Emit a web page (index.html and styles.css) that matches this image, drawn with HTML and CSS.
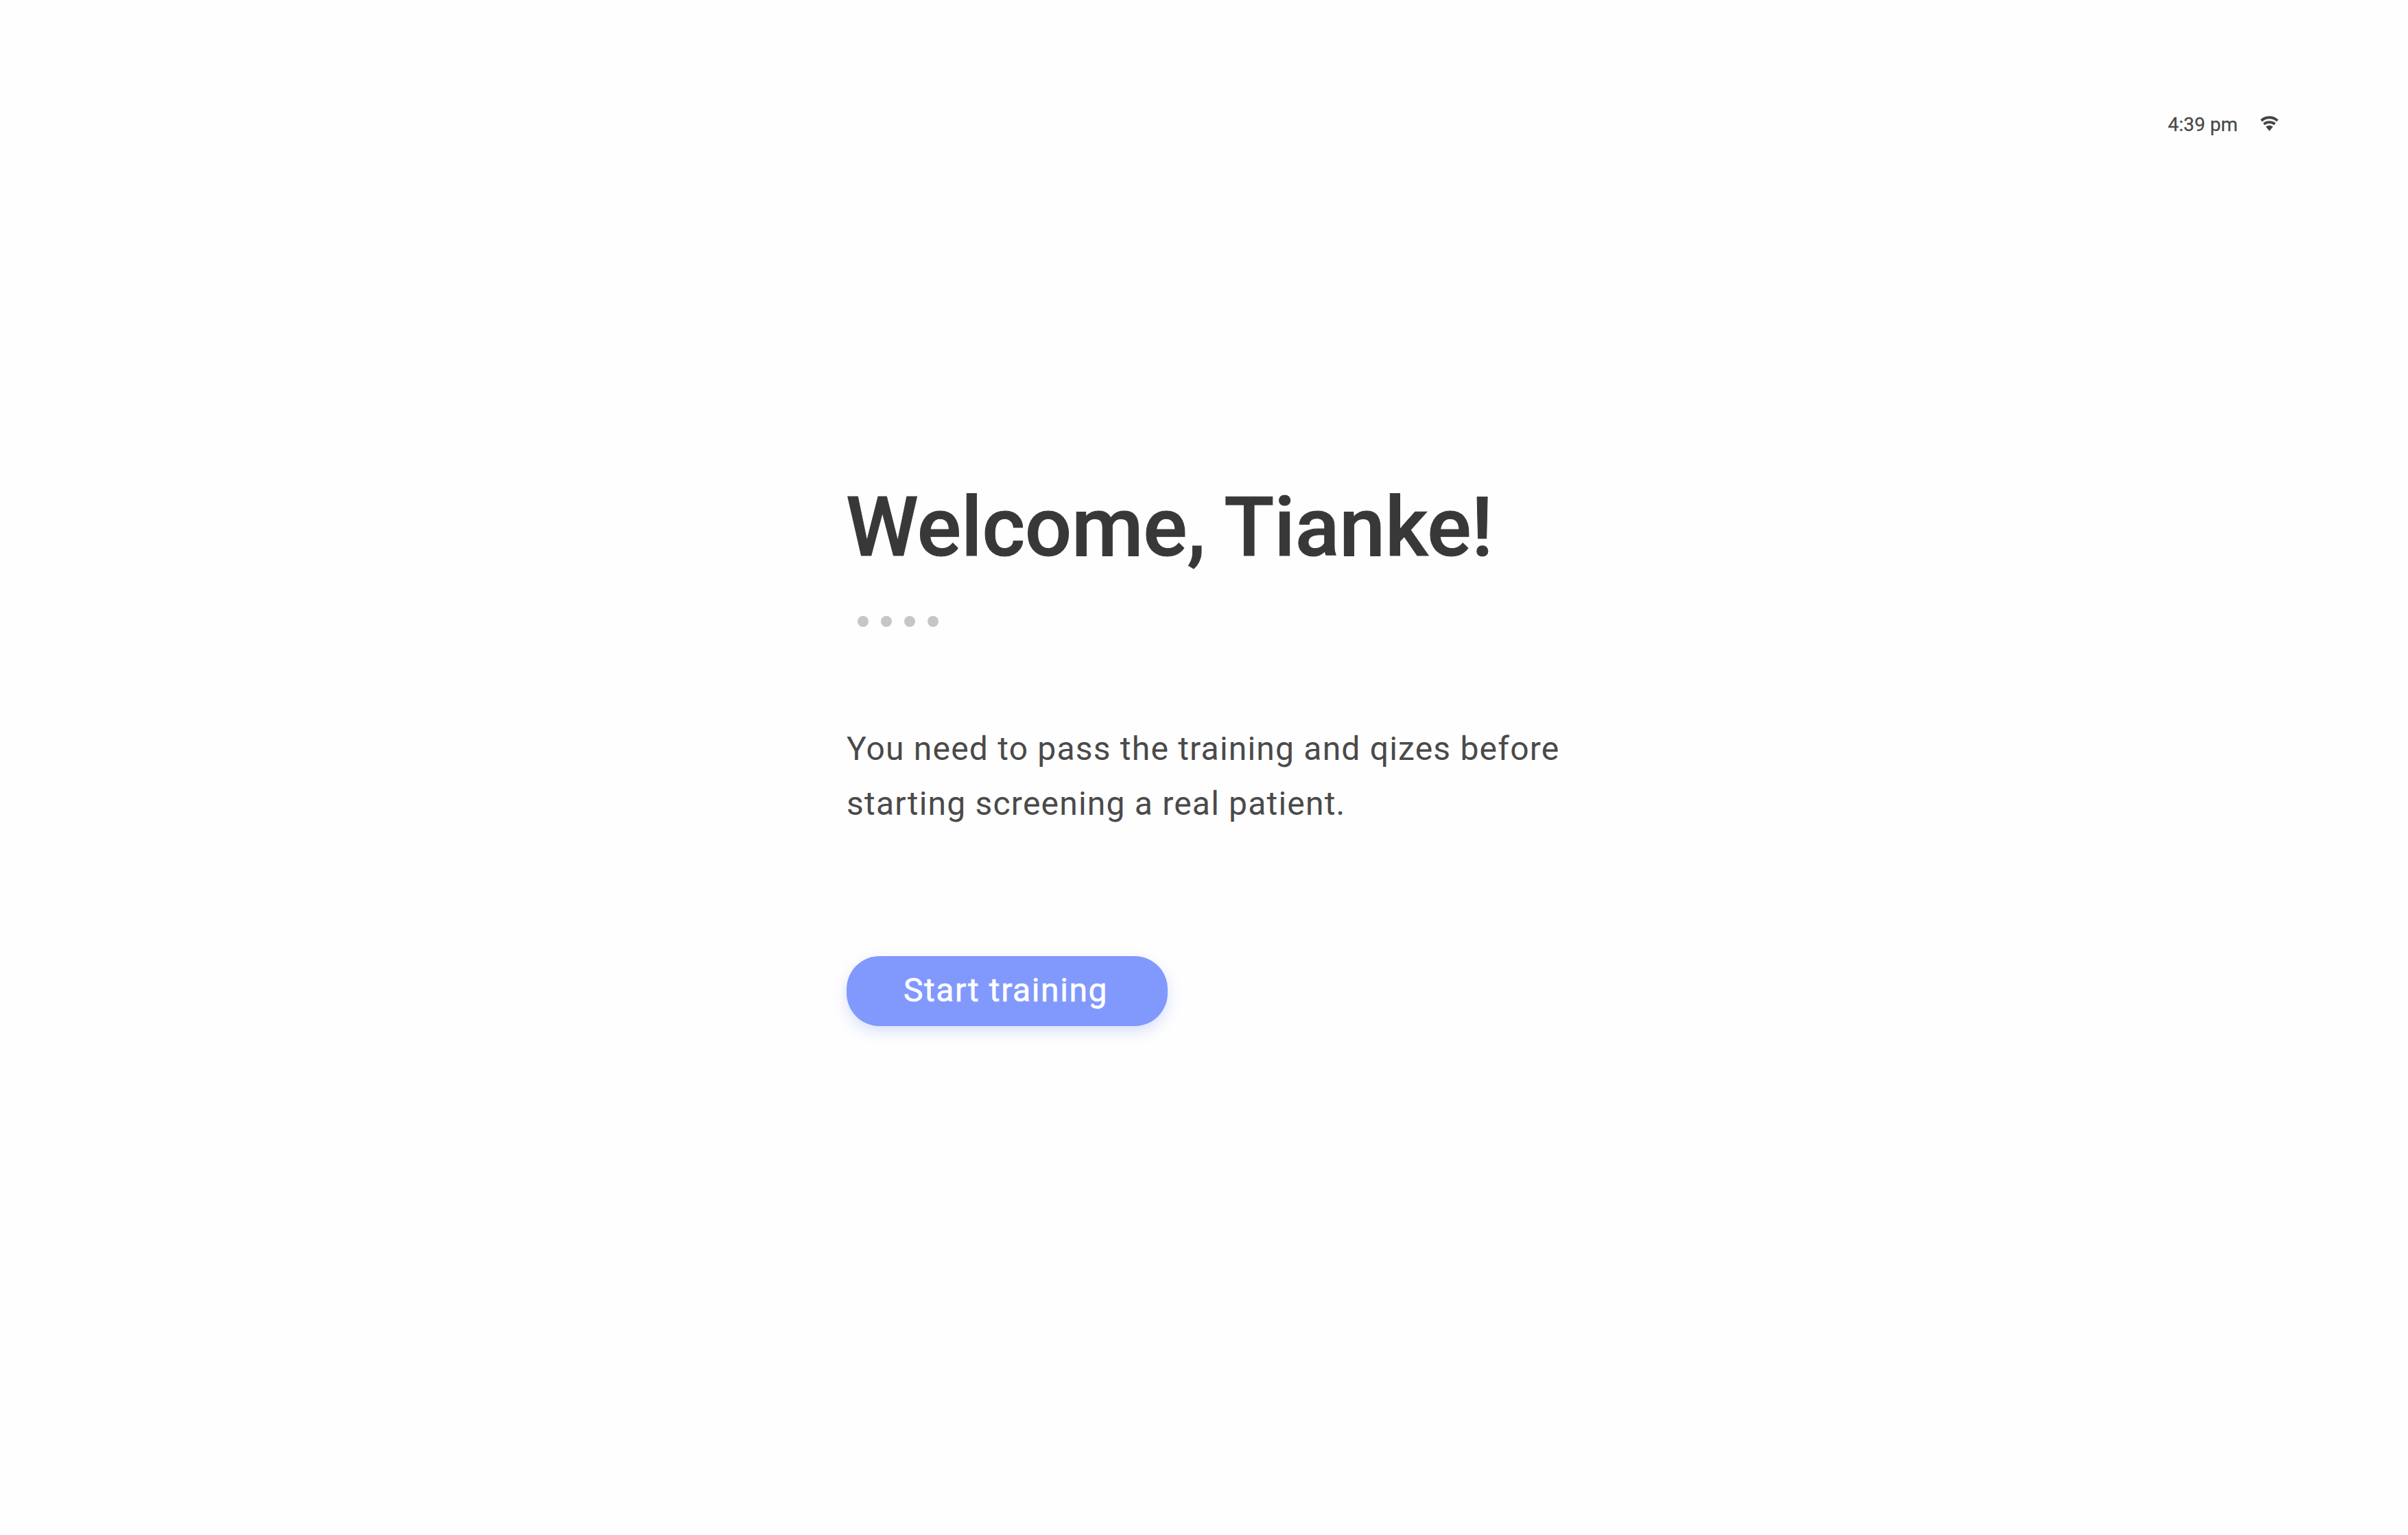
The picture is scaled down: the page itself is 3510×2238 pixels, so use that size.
FILE: index.html
```html
<!DOCTYPE html>
<html lang="en">
<head>
<meta charset="utf-8">
<title>Welcome</title>
<link rel="stylesheet" href="styles.css">
</head>
<body>
<div class="screen">
  <header class="status">
    <span class="time">4:39 pm</span>
    <svg class="wifi" viewBox="0 0 26 22" aria-hidden="true">
      <path d="M13 22 L7.8 15.8 C10.8 13.4 15.2 13.4 18.2 15.8 Z"/>
      <path d="M6.2 13.6 L3.8 10.6 C9 6.2 17 6.2 22.2 10.6 L19.8 13.6 C15.8 10.2 10.2 10.2 6.2 13.6 Z"/>
      <path d="M2.4 8.4 L0 5.4 C7.4 -1.6 18.6 -1.6 26 5.4 L23.6 8.4 C17.4 2.8 8.6 2.8 2.4 8.4 Z"/>
    </svg>
  </header>
  <main class="content">
    <h1 class="title">Welcome, Tianke!</h1>
    <div class="dots"><i class="dot"></i><i class="dot"></i><i class="dot"></i><i class="dot"></i></div>
    <p class="lead">You need to pass the training and qizes before<br>starting screening a real patient.</p>
    <button class="cta" type="button">Start training</button>
  </main>
</div>
</body>
</html>
```
FILE: styles.css
```css
* { box-sizing: border-box; }
html, body { margin: 0; padding: 0; }
body {
  width: 3510px;
  height: 2238px;
  background: #fefefe;
  font-family: Roboto, "Liberation Sans", sans-serif;
  overflow: hidden;
}
.screen { display: flex; flex-direction: column; height: 100%; }
.status {
  display: flex;
  align-items: center;
  justify-content: flex-end;
  gap: 33px;
  height: 40px;
  margin-top: 161px;
  padding-right: 189px;
  color: #444;
}
.time { font-size: 28px; font-weight: 400; letter-spacing: 0.1px; color: #4a4a4a; -webkit-text-stroke: 0.3px #4a4a4a; }
.wifi { width: 26px; height: 22px; fill: #444; margin-top: -3px; }
.content {
  display: flex;
  flex-direction: column;
  align-items: flex-start;
  padding: 498px 0 0 1234px;
}
.title {
  margin: 0 0 0 -1px;
  font-size: 120px;
  line-height: 140px;
  font-weight: 500;
  letter-spacing: -0.1px;
  color: #383838;
  -webkit-text-stroke: 1px #383838;
}
.dots { display: flex; gap: 18px; margin: 59px 0 0 16px; }
.dot { display: block; width: 16px; height: 16px; border-radius: 50%; background: #c6c6c6; }
.lead {
  margin: 138px 0 0;
  font-size: 48px;
  line-height: 80px;
  letter-spacing: 1.2px;
  color: #4a4a4a;
}
.cta {
  margin: 182px 0 0;
  width: 468px;
  height: 102px;
  padding: 0 4px 4px 0;
  border: 0;
  border-radius: 48px;
  background: #8199fd;
  color: #fff;
  font: 400 48px Roboto, sans-serif;
  letter-spacing: 1.6px;
  -webkit-text-stroke: 0.6px #fff;
  box-shadow: 0 8px 20px rgba(129, 153, 253, 0.3);
}
```
